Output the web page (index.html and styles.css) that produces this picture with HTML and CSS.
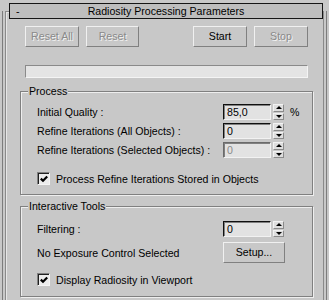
FILE: index.html
```html
<!DOCTYPE html>
<html>
  <head>
    <title>Radiosity Processing Parameters</title>
    <link rel="stylesheet" href="styles.css">
  </head>
  <body>
    <div class="panel">
      <div class="rollout">
        <div class="rollout-title">
          <span class="toggle">-</span>
          <span class="title-text">Radiosity Processing Parameters</span>
        </div>
        <div class="actions">
          <div class="btn-pair">
            <div class="btn btn-wide disabled">Reset All</div>
            <div class="btn disabled">Reset</div>
          </div>
          <div class="btn-pair">
            <div class="btn btn-wide">Start</div>
            <div class="btn btn-wide disabled">Stop</div>
          </div>
        </div>
        <div class="progress"></div>

        <div class="group group-process">
          <div class="group-label">Process</div>
          <div class="param-rows">
            <div class="param-row">
              <span class="param-name">Initial Quality :</span>
              <div class="spinner">
                <div class="field">85,0</div>
                <div class="arrows"><span class="up"></span><span class="down"></span></div>
              </div>
              <span class="unit">%</span>
            </div>
            <div class="param-row">
              <span class="param-name">Refine Iterations (All Objects) :</span>
              <div class="spinner">
                <div class="field">0</div>
                <div class="arrows"><span class="up"></span><span class="down"></span></div>
              </div>
            </div>
            <div class="param-row">
              <span class="param-name">Refine Iterations (Selected Objects) :</span>
              <div class="spinner">
                <div class="field field-disabled">0</div>
                <div class="arrows"><span class="up"></span><span class="down"></span></div>
              </div>
            </div>
          </div>
          <label class="check-row check-process">
            <span class="checkbox">
              <svg width="8" height="8" viewBox="0 0 8 8"><path d="M0.8 3.6 L3 5.8 L7.2 1.4" fill="none" stroke="#000" stroke-width="2.2"/></svg>
            </span>
            Process Refine Iterations Stored in Objects
          </label>
        </div>

        <div class="group group-tools">
          <div class="group-label">Interactive Tools</div>
          <div class="tool-grid">
            <span class="param-name">Filtering :</span>
            <div class="spinner">
              <div class="field">0</div>
              <div class="arrows"><span class="up"></span><span class="down"></span></div>
            </div>
            <span class="param-name">No Exposure Control Selected</span>
            <div class="btn btn-setup">Setup...</div>
          </div>
          <label class="check-row check-tools">
            <span class="checkbox">
              <svg width="8" height="8" viewBox="0 0 8 8"><path d="M0.8 3.6 L3 5.8 L7.2 1.4" fill="none" stroke="#000" stroke-width="2.2"/></svg>
            </span>
            Display Radiosity in Viewport
          </label>
        </div>
      </div>
    </div>
  </body>
</html>
```
FILE: styles.css
```css
/* 3ds Max style rollout */
body {
  margin: 0;
  padding: 0;
  background: #c8c8c8;
  font-family: "Liberation Sans", Arial, sans-serif;
  font-size: 10.6px;
  color: #000;
  overflow: hidden;
}
.panel {
  margin-left: 2px;
  width: 323px;
  height: 300px;
  border-left: 1px solid #7c7c7c;
  border-right: 1px solid #7c7c7c;
}
.rollout {
  margin: 11px 0 0 2px;
  width: 317px;
  height: 300px;
  border: 1px solid #8a8a8a;
  border-bottom: none;
  box-shadow: inset 1px 1px 0 #e6e6e6;
}
.rollout-title {
  margin: -9px 0 0 3px;
  height: 14px;
  line-height: 14px;
  border: 1px solid #151515;
  background: #bebebe;
  display: grid;
  grid-template-columns: 20px 1fr 20px;
}
.toggle {
  padding-left: 6px;
}
.title-text {
  text-align: center;
}

/* buttons */
.actions {
  display: flex;
  justify-content: space-between;
  margin-top: 7px;
  padding: 0 15px 0 19px;
}
.btn-pair {
  display: flex;
  gap: 7px;
}
.btn {
  box-sizing: border-box;
  width: 53px;
  height: 21px;
  line-height: 19px;
  text-align: center;
  border: 1px solid;
  border-color: #f0f0f0 #808080 #808080 #f0f0f0;
}
.btn-wide {
  width: 54px;
}
.btn.disabled {
  color: #8a8a8a;
  text-shadow: 1px 1px 0 #f2f2f2;
}
.progress {
  box-sizing: border-box;
  margin: 18px 15px 0 19px;
  height: 13px;
  background: #e4e4e4;
  border: 1px solid;
  border-color: #8a8a8a #f4f4f4 #f4f4f4 #8a8a8a;
}

/* group boxes */
.group {
  margin: 13px 10px 0 14px;
  border: 1px solid #808080;
  box-shadow: 1px 1px 0 #eeeeee, inset 1px 1px 0 #eeeeee;
  padding: 0 0 9px 16px;
}
.group-tools {
  margin-top: 11px;
  padding-bottom: 10px;
}
.group-label {
  margin: -7px 0 0 -9px;
  width: fit-content;
  height: 13px;
  line-height: 13px;
  padding: 0 1px;
  background: #c8c8c8;
}
.param-rows {
  display: flex;
  flex-direction: column;
  gap: 3px;
  margin-top: 6px;
}
.param-row {
  display: grid;
  grid-template-columns: 186px max-content max-content;
  align-items: center;
  height: 16px;
}
.unit {
  margin-left: 6px;
}
.spinner {
  display: flex;
  gap: 2px;
}
.field {
  box-sizing: border-box;
  width: 48px;
  height: 16px;
  line-height: 14px;
  padding-left: 3px;
  background: #e2e2e2;
  border: 1px solid;
  border-color: #101010 #f2f2f2 #f2f2f2 #101010;
  box-shadow: inset 1px 1px 0 #808080;
}
.field-disabled {
  color: #8a8a8a;
  border-color: #6a6a6a #f2f2f2 #f2f2f2 #6a6a6a;
}
.arrows {
  width: 11px;
  height: 16px;
  display: flex;
  flex-direction: column;
  gap: 1px;
  background: #c8c8c8;
}
.arrows span {
  flex: 1;
  display: flex;
  align-items: center;
  justify-content: center;
  background: #dedede;
  border: 1px solid;
  border-color: #f2f2f2 #8a8a8a #8a8a8a #f2f2f2;
}
.arrows .up::after,
.arrows .down::after {
  content: "";
  border-left: 3px solid transparent;
  border-right: 3px solid transparent;
}
.arrows .up::after {
  border-bottom: 3px solid #000;
}
.arrows .down::after {
  border-top: 3px solid #000;
}

/* checkbox rows */
.check-row {
  display: flex;
  align-items: center;
  gap: 6px;
  height: 13px;
}
.check-process {
  margin-top: 14px;
}
.check-tools {
  margin-top: 10px;
}
.checkbox {
  box-sizing: border-box;
  width: 13px;
  height: 13px;
  display: flex;
  align-items: center;
  justify-content: center;
  background: #ececec;
  border: 1px solid;
  border-color: #808080 #f4f4f4 #f4f4f4 #808080;
  box-shadow: inset 1px 1px 0 #202020;
}

/* interactive tools */
.tool-grid {
  display: grid;
  grid-template-columns: 186px max-content;
  grid-template-rows: 16px 21px;
  row-gap: 5px;
  align-items: center;
  margin-top: 8px;
}
.btn-setup {
  width: 62px;
}
```
